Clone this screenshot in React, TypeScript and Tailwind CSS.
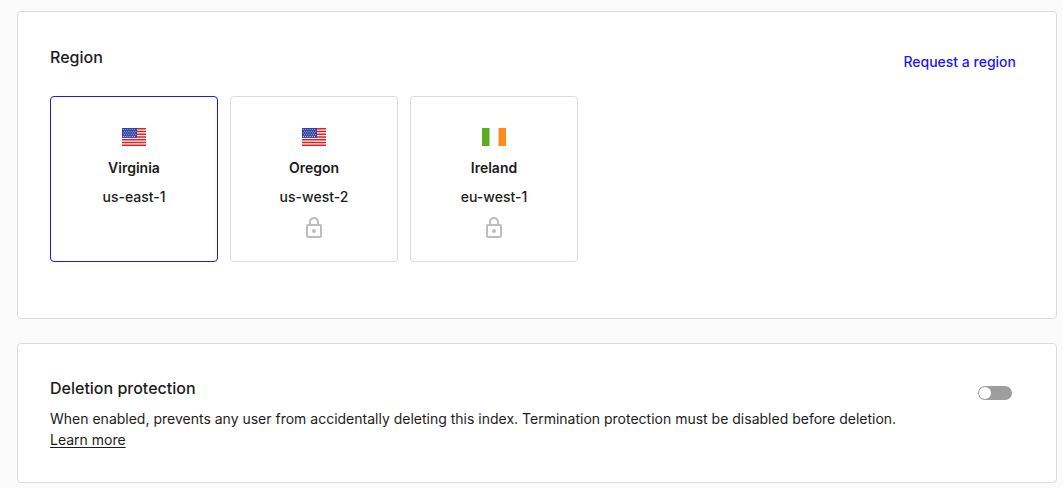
import React, { useState } from "react";

function UsFlag() {
  const stripes = [0, 3.667, 7.333, 11, 14.667, 18.333, 22];
  const rows = [0, 1, 2, 3, 4];
  const columns = [0, 1, 2, 3, 4, 5];
  return (
    <svg width="24" height="18" viewBox="0 0 32 24" aria-hidden="true">
      <rect width="32" height="24" fill="#f7fcff" />
      {stripes.map((y) => (
        <rect key={y} y={y} width="32" height="1.994" fill="#e31d1c" />
      ))}
      <rect width="20" height="13" fill="#2e42a5" />
      {rows.map((r) =>
        columns.map((c) => (
          <path
            key={`${r}-${c}`}
            transform={`translate(${1.8 + c * 3 + (r % 2) * 1.5} ${1.9 + r * 2.3})`}
            d="M0-.95.25-.3.9-.3.4.15.6.8 0 .42-.6.8-.4.15-.9-.3-.25-.3z"
            fill="#f7fcff"
          />
        ))
      )}
    </svg>
  );
}

function IrelandFlag() {
  return (
    <svg width="24" height="18" viewBox="0 0 32 24" aria-hidden="true">
      <rect width="32" height="24" fill="#f7fcff" />
      <rect width="10" height="24" fill="#5eaa22" />
      <rect x="22" width="10" height="24" fill="#ff8c1a" />
    </svg>
  );
}

function LockIcon() {
  return (
    <svg width="24" height="24" viewBox="0 0 24 24" fill="#bdbdbd" aria-hidden="true">
      <path d="M18 8h-1V6c0-2.76-2.24-5-5-5S7 3.24 7 6v2H6c-1.100 0-2 .9-2 2v10c0 1.100.9 2 2 2h12c1.100 0 2-.9 2-2V10c0-1.100-.9-2-2-2zM9 6c0-1.660 1.340-3 3-3s3 1.340 3 3v2H9V6zm9 14H6V10h12v10zm-6-3c1.100 0 2-.9 2-2s-.9-2-2-2-2 .9-2 2 .9 2 2 2z" />
    </svg>
  );
}

const regions = [
  { name: "Virginia", code: "us-east-1", flag: <UsFlag />, locked: false },
  { name: "Oregon", code: "us-west-2", flag: <UsFlag />, locked: true },
  { name: "Ireland", code: "eu-west-1", flag: <IrelandFlag />, locked: true },
];

export default function App() {
  const [isProtected, setProtected] = useState(false);
  return (
    <main className="flex min-h-screen flex-col gap-6 bg-[#fbfbfc] pt-[11px] pr-1.5 pb-[5px] pl-[17px] font-['Inter',sans-serif] text-sm text-[#1c1c1c]">
      <section className="rounded border border-[#d8dddd] bg-white px-8 pt-8 pb-14">
        <header className="flex items-start justify-between pr-2 pb-6">
          <h2 className="py-px text-base leading-6 font-medium">Region</h2>
          <a href="#request" className="pt-2 leading-5 font-medium text-[#1b17f5]">
            Request a region
          </a>
        </header>
        <div className="flex flex-wrap gap-3">
          {regions.map((r) => (
            <button
              key={r.code}
              type="button"
              disabled={r.locked}
              className={
                r.locked
                  ? "flex h-[166px] w-[168px] flex-col items-center rounded border border-[#d8dddd] pt-[31px]"
                  : "flex h-[166px] w-[168px] flex-col items-center rounded border border-[#1b17f5] pt-[31px]"
              }
            >
              {r.flag}
              <span className="mt-3 leading-5 font-semibold">{r.name}</span>
              <span className="mt-2 leading-[22px] font-medium">{r.code}</span>
              {r.locked && (
                <span className="mt-2">
                  <LockIcon />
                </span>
              )}
            </button>
          ))}
        </div>
      </section>

      <section className="flex items-start justify-between rounded border border-[#d8dddd] bg-white px-8 pt-8 pb-8">
        <div>
          <h2 className="text-base leading-6 font-medium">Deletion protection</h2>
          <p className="pt-2 leading-[21px]">
            When enabled, prevents any user from accidentally deleting this index. Termination protection must be disabled before deletion.
            <br />
            <a href="#learn" className="underline underline-offset-2">
              Learn more
            </a>
          </p>
        </div>
        <label className="mt-2.5 mr-3 flex shrink-0">
          <input
            type="checkbox"
            role="switch"
            aria-label="Deletion protection"
            checked={isProtected}
            onChange={(e) => setProtected(e.target.checked)}
            className="flex h-3.5 w-[34px] cursor-pointer appearance-none items-center rounded-full bg-[#9e9e9e] px-px before:size-3 before:rounded-full before:bg-white checked:justify-end checked:bg-[#1b17f5]"
          />
        </label>
      </section>
    </main>
  );
}
